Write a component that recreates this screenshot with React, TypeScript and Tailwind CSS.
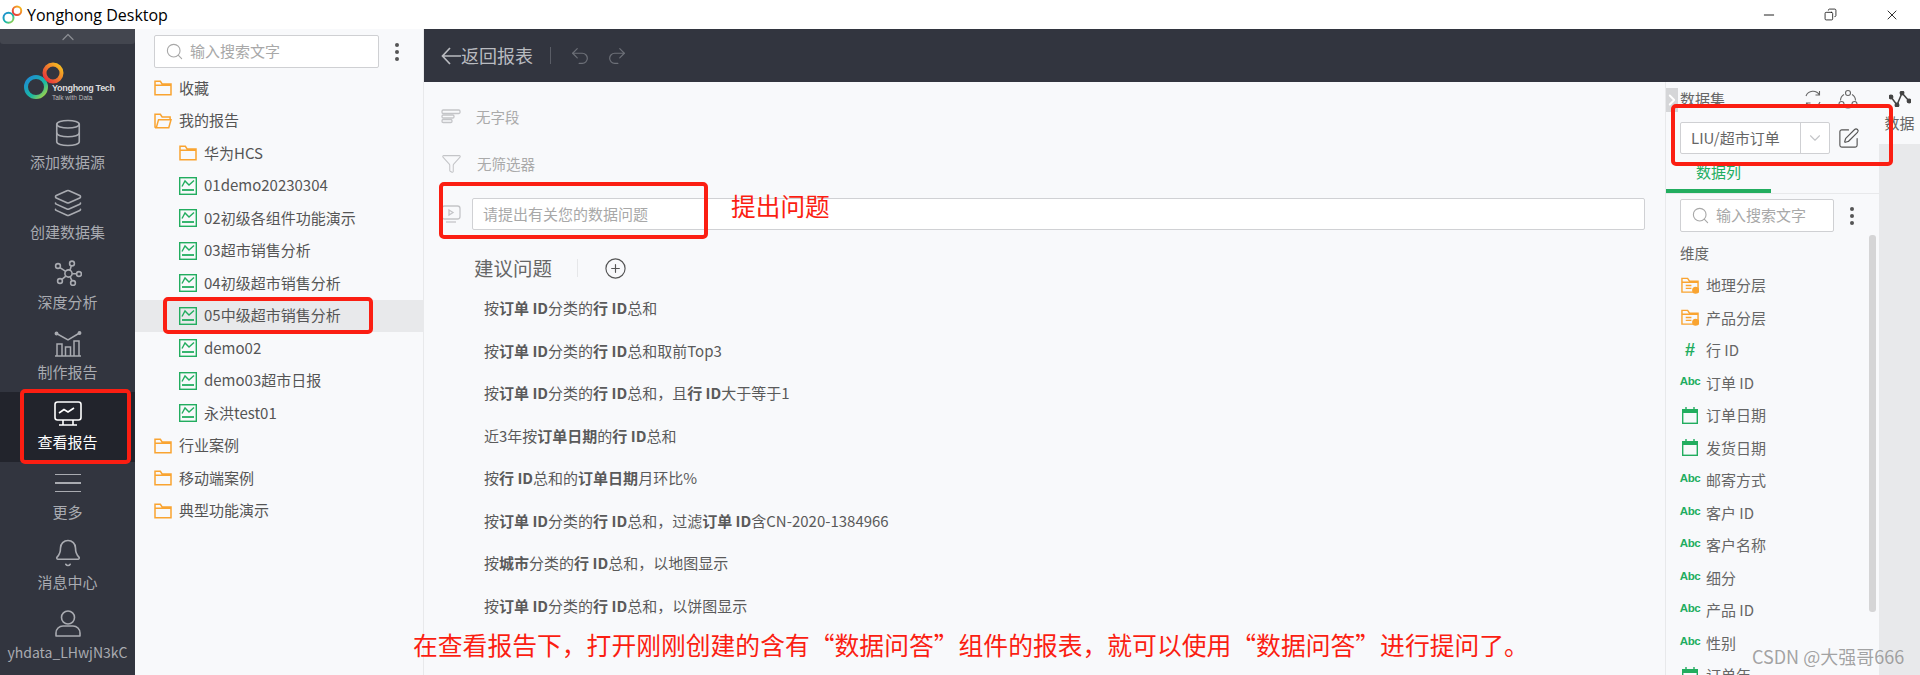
import type { ReactNode } from 'react';
import { Bell, ChevronDown, ChevronRight, ChevronUp, Copy, Database, Filter, Layers, Minus, PlusCircle, Redo2, Search, SquarePen, Undo2, X } from 'lucide-react';

const cjk = { fontFamily: '"Noto Sans CJK SC", "Noto Sans", sans-serif' };

function FolderIcon({ open = false }: { open?: boolean }) {
  return (
    <svg width="18" height="16" viewBox="0 0 20 18" fill="none" stroke="#f9a431" strokeWidth="1.7" className="shrink-0">
      {open ? (
        <path d="M1 16.5V1.5h6l2 3h9v3M1 16.5h15.5l2.5-9H5l-2.5 9" />
      ) : (
        <path d="M1 16.5V1.5h6l2 3h10v12zM1 6h18" />
      )}
    </svg>
  );
}

function ReportIcon() {
  return (
    <svg width="18" height="18" viewBox="0 0 18 18" fill="none" stroke="#22ad5f" strokeWidth="1.4" className="shrink-0">
      <rect x="0.7" y="0.7" width="16.6" height="16.6" />
      <path d="M3 9.5 L6 4 L10 8 L15 3.5" />
      <path d="M3 13h12" strokeWidth="1.8" />
    </svg>
  );
}

function NetworkIcon() {
  return (
    <svg width="28" height="26" viewBox="0 0 28 26" fill="none" stroke="#a9abb1" strokeWidth="1.6">
      <circle cx="14.5" cy="13.5" r="3.6" />
      <circle cx="18" cy="3.5" r="2.4" />
      <circle cx="4" cy="6" r="2.4" />
      <circle cx="25" cy="14" r="2.4" />
      <circle cx="6" cy="21" r="2.4" />
      <circle cx="19" cy="23" r="2.4" />
      <path d="M16 10.2 17.3 5.8M6 7.6l5.6 3.8M18.2 13.7h4.5M8 19.4l3.8-3.3M16.2 16.8l1.8 4" />
    </svg>
  );
}

function ChartIcon() {
  return (
    <svg width="28" height="27" viewBox="0 0 28 27" fill="none" stroke="#a9abb1" strokeWidth="1.5">
      <path d="M1 26h26" />
      <path d="M3 26V14h5v12M11.5 26V17h5v9M20 26V11h5v15" />
      <path d="M2.5 3.5 14 10 25.5 3" />
      <circle cx="2.5" cy="3.5" r="1.2" fill="#a9abb1" />
      <circle cx="25.5" cy="3" r="1.2" fill="#a9abb1" />
    </svg>
  );
}

function MonitorIcon() {
  return (
    <svg width="28" height="25" viewBox="0 0 28 25" fill="none" stroke="#ffffff" strokeWidth="1.6">
      <rect x="1" y="1" width="26" height="18" rx="2.5" />
      <path d="M5 12l5-3.5 4 2.5 6-4" />
      <path d="M9 19v5M19 19v5M5 24h18" />
    </svg>
  );
}

function UserIcon() {
  return (
    <svg width="26" height="27" viewBox="0 0 26 27" fill="none" stroke="#a9abb1" strokeWidth="1.6">
      <circle cx="13" cy="7.5" r="6.5" />
      <path d="M1 26v-3a7 7 0 0 1 7-7h10a7 7 0 0 1 7 7v3z" strokeLinejoin="round" />
    </svg>
  );
}

function Logo({ size = 'large' }: { size?: 'large' | 'small' }) {
  const isLarge = size === 'large';
  return (
    <svg width={isLarge ? 42 : 21} height={isLarge ? 39 : 20} viewBox="0 0 42 39" fill="none" strokeWidth="4" className="shrink-0">
      <defs>
        <linearGradient id={`ring-a-${size}`} x1="0" y1="0" x2="1" y2="1">
          <stop offset="0" stopColor="#1e88d8" />
          <stop offset="0.6" stopColor="#19b9a2" />
          <stop offset="1" stopColor="#b6d63a" />
        </linearGradient>
        <linearGradient id={`ring-b-${size}`} x1="0" y1="1" x2="1" y2="0">
          <stop offset="0" stopColor="#e5273f" />
          <stop offset="1" stopColor="#f7c71d" />
        </linearGradient>
      </defs>
      <circle cx="13" cy="25" r="10" stroke={`url(#ring-a-${size})`} />
      <circle cx="30" cy="11" r="8.5" stroke={`url(#ring-b-${size})`} />
    </svg>
  );
}

function NavItem({ icon, label, active = false, small = false }: { icon: ReactNode; label: string; active?: boolean; small?: boolean }) {
  return (
    <div className={`h-[70px] flex flex-col items-center justify-end pb-[10px] ${active ? 'bg-[#22242c] text-white' : 'text-[#a9abb1]'}`}>
      <div className="h-[32px] flex items-center justify-center">{icon}</div>
      <div className={`mt-[3px] leading-[20px] whitespace-nowrap ${small ? 'text-[14px]' : 'text-[15px]'}`}>{label}</div>
    </div>
  );
}

function TreeRow({ icon, label, indent = false, active = false }: { icon: ReactNode; label: string; indent?: boolean; active?: boolean }) {
  return (
    <div className={`h-[32.5px] flex items-center gap-[7px] text-[15px] text-[#555] ${indent ? 'pl-[44px]' : 'pl-[19px]'} ${active ? 'bg-[#e8e9eb]' : ''}`}>
      {icon}
      <span className="whitespace-nowrap -mt-[1px]">{label}</span>
    </div>
  );
}

function SearchBox({ width }: { width: string }) {
  return (
    <div className={`${width} h-[33px] flex items-center gap-[6px] pl-[10px] bg-white border border-[#cfd0d3] rounded-[2px] text-[15px] text-[#a8a8a8]`}>
      <Search size={19} strokeWidth={1.4} className="text-[#a8a8a8]" />
      <span className="whitespace-nowrap">输入搜索文字</span>
    </div>
  );
}

function Kebab() {
  return (
    <div className="flex flex-col gap-[3px]">
      <span className="w-[4px] h-[4px] rounded-full bg-[#555]" />
      <span className="w-[4px] h-[4px] rounded-full bg-[#555]" />
      <span className="w-[4px] h-[4px] rounded-full bg-[#555]" />
    </div>
  );
}

function CalendarIcon() {
  return (
    <svg width="16" height="17" viewBox="0 0 16 17" fill="none">
      <rect x="0.7" y="2.7" width="14.6" height="13.6" stroke="#22ad5f" strokeWidth="1.4" />
      <rect x="0" y="2" width="16" height="4" fill="#22ad5f" />
      <path d="M4 0v3M12 0v3" stroke="#22ad5f" strokeWidth="1.4" />
    </svg>
  );
}

function FieldFolderIcon() {
  return (
    <svg width="19" height="17" viewBox="0 0 19 17" fill="none" stroke="#f9a431" strokeWidth="1.5">
      <path d="M1 15.5V1h6l2 3h9v11.5z" />
      <path d="M1 5h17M5 8.5h6M5 11.5h6" />
      <circle cx="15.5" cy="13.5" r="3" fill="#f9a431" />
    </svg>
  );
}

function AbcIcon() {
  return <span className="text-[11.5px] leading-none font-bold text-[#22ad5f] tracking-[-0.4px] -mt-[3px]" style={{ fontFamily: '"Liberation Sans", sans-serif' }}>Abc</span>;
}

function FieldRow({ icon, label }: { icon: ReactNode; label: string }) {
  return (
    <div className="h-[32.5px] flex items-center gap-[7px] pl-[1px] text-[15px] text-[#666]">
      <div className="w-[18px] shrink-0 flex items-center justify-center">{icon}</div>
      <span className="whitespace-nowrap">{label}</span>
    </div>
  );
}

function Question({ children }: { children: ReactNode }) {
  return <div className="h-[42.5px] flex items-center text-[15px] text-[#5a5a5a] whitespace-pre">{children}</div>;
}

const hashIcon = (
  <span className="text-[18px] leading-none font-bold text-[#22ad5f]" style={{ fontFamily: '"Liberation Sans", sans-serif' }}>#</span>
);

const reports = ['01demo20230304', '02初级各组件功能演示', '03超市销售分析', '04初级超市销售分析', '05中级超市销售分析', 'demo02', 'demo03超市日报', '永洪test01'];

const fields: { icon: ReactNode; label: string }[] = [
  { icon: <FieldFolderIcon />, label: '地理分层' },
  { icon: <FieldFolderIcon />, label: '产品分层' },
  { icon: hashIcon, label: '行 ID' },
  { icon: <AbcIcon />, label: '订单 ID' },
  { icon: <CalendarIcon />, label: '订单日期' },
  { icon: <CalendarIcon />, label: '发货日期' },
  { icon: <AbcIcon />, label: '邮寄方式' },
  { icon: <AbcIcon />, label: '客户 ID' },
  { icon: <AbcIcon />, label: '客户名称' },
  { icon: <AbcIcon />, label: '细分' },
  { icon: <AbcIcon />, label: '产品 ID' },
  { icon: <AbcIcon />, label: '性别' },
  { icon: <CalendarIcon />, label: '订单年' },
];

export default function App() {
  return (
    <div className="relative w-[1920px] h-[675px] overflow-hidden flex flex-col bg-[#f8f9fb]" style={cjk}>
      {/* Title bar */}
      <div className="h-[29px] shrink-0 bg-white flex items-center pl-[2px]">
        <Logo size="small" />
        <span className="ml-[4px] text-[16px] text-black" style={{ fontFamily: '"Open Sans", sans-serif' }}>Yonghong Desktop</span>
        <div className="ml-auto flex items-center gap-[47px] pr-[20px] text-[#111]">
          <Minus size={16} strokeWidth={1.4} />
          <Copy size={13} strokeWidth={1.5} className="-scale-x-100" />
          <X size={16} strokeWidth={1.3} />
        </div>
      </div>

      <div className="flex-1 flex min-h-0">
        {/* Left nav */}
        <div className="w-[135px] shrink-0 bg-[#32353f]">
          <div className="h-[15px] bg-[#43464f] flex items-center justify-center rounded-b-[3px]">
            <ChevronUp size={20} strokeWidth={1.5} className="text-[#8a8c92]" />
          </div>
          <div className="h-[68px] flex items-start pl-[23px] pt-[18px]">
            <Logo />
            <div className="-ml-[13px] mt-[22px] leading-none" style={{ fontFamily: '"Liberation Sans", sans-serif' }}>
              <div className="text-[9px] font-bold text-[#ddd] whitespace-nowrap tracking-[-0.3px]">Yonghong Tech</div>
              <div className="mt-[2px] text-[6.5px] text-[#bbb] whitespace-nowrap">Talk with Data</div>
            </div>
          </div>
          <NavItem icon={<Database size={30} strokeWidth={1.3} className="text-[#a9abb1]" />} label="添加数据源" />
          <NavItem icon={<Layers size={30} strokeWidth={1.3} className="text-[#a9abb1]" />} label="创建数据集" />
          <NavItem icon={<NetworkIcon />} label="深度分析" />
          <NavItem icon={<ChartIcon />} label="制作报告" />
          <NavItem icon={<MonitorIcon />} label="查看报告" active />
          <NavItem icon={<div className="w-[26px] flex flex-col gap-[7px]"><span className="h-[1.5px] bg-[#a9abb1]" /><span className="h-[1.5px] bg-[#a9abb1]" /><span className="h-[1.5px] bg-[#a9abb1]" /></div>} label="更多" />
          <NavItem icon={<Bell size={30} strokeWidth={1.3} className="text-[#a9abb1]" />} label="消息中心" />
          <NavItem icon={<UserIcon />} label="yhdata_LHwjN3kC" small />
        </div>

        {/* Report tree */}
        <div className="w-[289px] shrink-0 border-r border-[#e8e9eb] bg-[#f8f9fb]">
          <div className="h-[43px] flex items-center pl-[19px] pt-[2px]">
            <SearchBox width="w-[225px]" />
            <div className="ml-[16px]"><Kebab /></div>
          </div>
          <TreeRow icon={<FolderIcon />} label="收藏" />
          <TreeRow icon={<FolderIcon open />} label="我的报告" />
          <TreeRow indent icon={<FolderIcon />} label="华为HCS" />
          {reports.map((name) => (
            <TreeRow key={name} indent icon={<ReportIcon />} label={name} active={name.startsWith('05')} />
          ))}
          <TreeRow icon={<FolderIcon />} label="行业案例" />
          <TreeRow icon={<FolderIcon />} label="移动端案例" />
          <TreeRow icon={<FolderIcon />} label="典型功能演示" />
        </div>

        <div className="flex-1 min-w-0 flex flex-col">
          {/* Toolbar */}
          <div className="h-[53px] shrink-0 bg-[#32353f] flex items-center pl-[17px] text-[#b9bbc0]">
            <svg width="20" height="18" viewBox="0 0 20 18" fill="none" stroke="#b9bbc0" strokeWidth="1.7"><path d="M9 1 1.5 9 9 17M1.5 9H20" /></svg>
            <span className="text-[18px] -mt-[1px]">返回报表</span>
            <span className="ml-[17px] w-px h-[17px] bg-[#5a5d66]" />
            <Undo2 size={22} strokeWidth={1.3} className="ml-[18px] text-[#6d7078]" />
            <Redo2 size={22} strokeWidth={1.3} className="ml-[15px] text-[#6d7078]" />
          </div>

          <div className="flex-1 flex min-h-0">
            {/* Question component */}
            <div className="flex-1 min-w-0 pl-[17px] pr-[20px]">
              <div className="mt-[11px] h-[47px] flex items-center gap-[15px] text-[14.5px] text-[#aaa]">
                <svg width="20" height="15" viewBox="0 0 20 15" fill="none" stroke="#c4c5c8" strokeWidth="1.3"><rect x="1" y="1" width="18" height="3.5" rx="1.2" /><rect x="1" y="6" width="12" height="3" rx="1.2" /><rect x="1" y="10.5" width="10" height="3" rx="1.2" /></svg>
                <span>无字段</span>
              </div>
              <div className="h-[47px] flex items-center gap-[15px] text-[14.5px] text-[#aaa]">
                <Filter size={21} strokeWidth={1.2} className="text-[#c4c5c8]" />
                <span>无筛选器</span>
              </div>
              <div className="mt-[11px] flex items-center gap-[11px]">
                <svg width="20" height="18" viewBox="0 0 20 18" fill="none" stroke="#c4c5c8" strokeWidth="1.3"><rect x="1" y="1" width="18" height="13" rx="2.5" /><path d="M8 5l4 2.5L8 10z" /><path d="M5 17h10" /></svg>
                <div className="flex-1 h-[32px] bg-white border border-[#d0d1d4] rounded-[2px] pl-[10px] flex items-center text-[15px] text-[#a8a8a8]">请提出有关您的数据问题</div>
              </div>
              <div className="mt-[22px] ml-[33px] flex items-center text-[#666] h-[32px]">
                <span className="text-[19.5px] leading-none">建议问题</span>
                <span className="ml-[25px] w-px h-[18px] bg-[#e6e7e9]" />
                <PlusCircle size={23} strokeWidth={1.2} className="ml-[26px] text-[#555]" />
              </div>
              <div className="mt-[3px] ml-[43px]">
                <Question>按<b>订单 ID</b>分类的<b>行 ID</b>总和</Question>
                <Question>按<b>订单 ID</b>分类的<b>行 ID</b>总和取前Top3</Question>
                <Question>按<b>订单 ID</b>分类的<b>行 ID</b>总和，且<b>行 ID</b>大于等于1</Question>
                <Question>近3年按<b>订单日期</b>的<b>行 ID</b>总和</Question>
                <Question>按<b>行 ID</b>总和的<b>订单日期</b>月环比%</Question>
                <Question>按<b>订单 ID</b>分类的<b>行 ID</b>总和，过滤<b>订单 ID</b>含CN-2020-1384966</Question>
                <Question>按<b>城市</b>分类的<b>行 ID</b>总和，以地图显示</Question>
                <Question>按<b>订单 ID</b>分类的<b>行 ID</b>总和，以饼图显示</Question>
              </div>
            </div>

            {/* Data panel */}
            <div className="w-[255px] shrink-0 border-l border-[#e8e9eb] flex">
              <div className="w-[213px] shrink-0 relative">
                <div className="absolute left-0 top-[6px] w-[12px] h-[24px] bg-[#d5d6d8] flex items-center justify-center">
                  <ChevronRight size={18} strokeWidth={2.5} className="text-white shrink-0" />
                </div>
                <div className="h-[34px] flex items-center pl-[14px] pr-[21px] text-[15px] text-[#666]">
                  <span>数据集</span>
                  <svg width="20" height="20" viewBox="0 0 20 20" fill="none" stroke="#666" strokeWidth="1.1" className="ml-auto"><path d="M3 7a7.5 7.5 0 0 1 13.5-1M17 13a7.5 7.5 0 0 1-13.5 1M16.5 2v4h-4M3.5 18v-4h4" /></svg>
                  <svg width="20" height="20" viewBox="0 0 20 20" fill="none" stroke="#666" strokeWidth="1.1" className="ml-[15px]"><circle cx="10" cy="4" r="2.5" /><circle cx="3.5" cy="15" r="2.5" /><circle cx="16.5" cy="15" r="2.5" /><path d="M6 5.5a7 7 0 0 0-3.5 6M14 5.5a7 7 0 0 1 3.5 6M6 17.5a7 7 0 0 0 8 0" /></svg>
                </div>
                <div className="mt-[6px] pl-[14px] flex items-center">
                  <div className="w-[150px] h-[32px] bg-white border border-[#cfd0d3] rounded-[2px] flex items-center text-[15px] text-[#666]">
                    <span className="flex-1 pl-[10px] whitespace-nowrap">LIU/超市订单</span>
                    <span className="w-[29px] h-full border-l border-[#cfd0d3] flex items-center justify-center"><ChevronDown size={18} strokeWidth={1.5} className="text-[#c4c5c8]" /></span>
                  </div>
                  <SquarePen size={23} strokeWidth={1.2} className="ml-[7px] text-[#555]" />
                </div>
                <div className="h-[40px] border-b border-[#e8e9eb]">
                  <div className="w-[105px] h-[39px] text-center pt-[7px] text-[15px] text-[#22ad5f] border-b-[4px] border-[#22ad5f]">数据列</div>
                </div>
                <div className="mt-[5px] pl-[14px] flex items-center">
                  <SearchBox width="w-[154px]" />
                  <div className="ml-[16px]"><Kebab /></div>
                </div>
                <div className="mt-[5px] pl-[14px]">
                  <div className="h-[32px] flex items-center text-[14.5px] text-[#666]">维度</div>
                  {fields.map((field) => (
                    <FieldRow key={field.label} icon={field.icon} label={field.label} />
                  ))}
                </div>
                <div className="absolute left-[203px] top-[153px] w-[7px] h-[377px] rounded-[3px] bg-[#d5d5d6]" />
              </div>
              <div className="flex-1 flex flex-col">
                <div className="h-[62px] flex flex-col items-center pt-[9px] text-[15px] text-[#666]">
                  <svg width="22" height="16" viewBox="0 0 22 16" fill="none" stroke="#444" strokeWidth="1.5"><path d="M2 6 8 14l5-12 7 8" /><circle cx="2" cy="6" r="1.7" fill="#444" /><circle cx="8" cy="14" r="1.7" fill="#444" /><circle cx="13" cy="2" r="1.7" fill="#444" /><circle cx="20" cy="10" r="1.7" fill="#444" /></svg>
                  <span className="mt-[5px]">数据</span>
                </div>
                <div className="flex-1 bg-[#e8e9eb]" />
              </div>
            </div>
          </div>
        </div>
      </div>

      {/* Red annotations drawn over the screenshot */}
      <div className="absolute left-[20px] top-[389px] w-[111px] h-[75px] border-[4px] border-[#fb1e12] rounded-[5px]" />
      <div className="absolute left-[163px] top-[297px] w-[210px] h-[37px] border-[4px] border-[#fb1e12] rounded-[5px]" />
      <div className="absolute left-[439px] top-[182px] w-[269px] h-[57px] border-[4px] border-[#fb1e12] rounded-[5px]" />
      <div className="absolute left-[1671px] top-[104px] w-[222px] h-[62px] border-[4px] border-[#fb1e12] rounded-[5px]" />
      <div className="absolute left-[731px] top-[188px] text-[24.7px] leading-[34px] text-[#fb1e12] whitespace-nowrap">提出问题</div>
      <div className="absolute left-[413px] top-[626px] text-[24.8px] leading-[36px] text-[#fb1e12] whitespace-nowrap">在查看报告下，打开刚刚创建的含有“数据问答”组件的报表，就可以使用“数据问答”进行提问了。</div>
      <div className="absolute left-[1752px] top-[644px] text-[18px] leading-[24px] text-[#8c8c8c]/80 whitespace-nowrap">CSDN @大强哥666</div>
    </div>
  );
}
